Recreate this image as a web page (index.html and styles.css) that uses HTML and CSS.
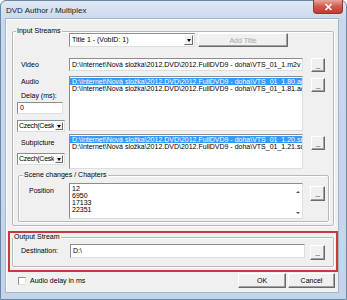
FILE: index.html
```html
<!DOCTYPE html>
<html lang="cs">

<head>
	<meta charset="UTF-8">
	<title>DVD Author / Multiplex</title>
	<link rel="stylesheet" href="styles.css">
</head>

<body>
	<div class="window">
		<div class="titlebar">
			<span class="title">DVD Author / Multiplex</span>
			<span class="close">
				<svg width="9" height="8" viewBox="0 0 9 8"><path d="M1.5 1 L7.5 7 M7.5 1 L1.5 7" stroke="#fff" stroke-width="1.6" fill="none"/></svg>
			</span>
		</div>

		<div class="client">
			<fieldset class="group input-streams">
				<legend>Input Streams</legend>

				<div class="row title-row">
					<div class="combo title-combo">
						<span class="combo-text">Title 1 - (VobID: 1)</span>
						<span class="combo-btn"><i class="arrow"></i></span>
					</div>
					<button class="btn add-title" disabled>Add Title</button>
				</div>

				<div class="row video-row">
					<label class="lbl">Video</label>
					<div class="field path">D:\Internet\Nová složka\2012.DVD\2012.FullDVD9 - doha\VTS_01_1.m2v</div>
					<button class="btn dots">...</button>
				</div>

				<div class="row audio-row">
					<div class="side">
						<div class="lbl audio-lbl">Audio</div>
						<div class="lbl delay-lbl">Delay (ms):</div>
						<div class="field delay">0</div>
						<div class="combo lang">
							<span class="combo-text">Czech(Cesk</span>
							<span class="combo-btn"><i class="arrow"></i></span>
						</div>
					</div>
					<div class="list audio-list">
						<div class="item sel">D:\Internet\Nová složka\2012.DVD\2012.FullDVD9 - doha\VTS_01_1.80.ac3</div>
						<div class="item">D:\Internet\Nová složka\2012.DVD\2012.FullDVD9 - doha\VTS_01_1.81.ac3</div>
					</div>
					<button class="btn dots">...</button>
				</div>

				<div class="row sub-row">
					<div class="side">
						<div class="lbl sub-lbl">Subpicture</div>
						<div class="combo lang">
							<span class="combo-text">Czech(Cesk</span>
							<span class="combo-btn"><i class="arrow"></i></span>
						</div>
					</div>
					<div class="list sub-list">
						<div class="item sel">D:\Internet\Nová složka\2012.DVD\2012.FullDVD9 - doha\VTS_01_1.20.sup</div>
						<div class="item">D:\Internet\Nová složka\2012.DVD\2012.FullDVD9 - doha\VTS_01_1.21.sup</div>
					</div>
					<button class="btn dots">...</button>
				</div>

				<fieldset class="group scene">
					<legend>Scene changes / Chapters</legend>
					<div class="row scene-row">
						<label class="lbl pos-lbl">Position</label>
						<div class="list scene-list">
							<div class="scene-items">
								<div class="item">12</div>
								<div class="item">6950</div>
								<div class="item">17133</div>
								<div class="item">22351</div>
							</div>
							<div class="vscroll">
								<i class="up"></i>
								<i class="down"></i>
							</div>
						</div>
						<button class="btn dots wide">...</button>
					</div>
				</fieldset>
			</fieldset>

			<div class="highlight">
				<fieldset class="group output">
					<legend>Output Stream</legend>
					<div class="row dest-row">
						<label class="lbl dest-lbl">Destination:</label>
						<div class="field dest">D:\</div>
						<button class="btn dots wide">...</button>
					</div>
				</fieldset>
			</div>

			<div class="footer">
				<span class="check"></span>
				<span class="check-lbl">Audio delay in ms</span>
				<button class="btn ok">OK</button>
				<button class="btn cancel">Cancel</button>
			</div>
		</div>
	</div>
</body>

</html>
```

FILE: styles.css
```css
* {
	box-sizing: border-box;
}

html,
body {
	height: 300px;
	overflow: hidden;
}

body {
	margin: 0;
	font-family: "Liberation Sans", Arial, sans-serif;
	font-size: 7px;
	color: #000;
	background: #fff;
}

.window {
	width: 347px;
	height: 300px;
	padding: 0 7px 0 4px;
	background: linear-gradient(#dfe9f5, #c9d9ec 18px, #c4d5ea);
	border: 1px solid #6a87a6;
	border-radius: 6px 6px 0 0;
	display: flex;
	flex-direction: column;
}

.titlebar {
	height: 17px;
	flex: none;
	display: flex;
	align-items: flex-start;
}

.title {
	font-size: 8px;
	line-height: 9px;
	margin: 5px 0 0 1px;
	color: #1a1a1a;
}

.close {
	margin: -1px -4px 0 auto;
	width: 30px;
	height: 14px;
	border: 1px solid #8b3b35;
	border-top: none;
	border-radius: 0 0 4px 4px;
	background: linear-gradient(#e9a79e, #d2594c 50%, #c23a2c);
	display: flex;
	align-items: center;
	justify-content: center;
}

.client {
	height: 275px;
	flex: none;
	background: #f0f0f0;
	border: 1px solid #a3b5ca;
	box-shadow: inset 1px 1px 0 #fff;
}

/* group boxes */
.group {
	margin: 0;
	padding: 0;
	min-width: 0;
	border: 1px solid #b9b9b9;
	border-radius: 2px;
	box-shadow: 1px 1px 0 #fff, inset 1px 1px 0 #fff;
}

legend {
	padding: 0 1px;
	line-height: 6px;
	height: 6px;
	background: #f0f0f0;
}

.input-streams {
	margin: 9px 0 0 6px;
	width: 322px;
	height: 198px;
}

.input-streams > legend {
	margin-left: 3px;
}

.row {
	display: flex;
	align-items: flex-start;
}

.lbl {
	display: block;
	white-space: nowrap;
}

/* inputs */
.field {
	background: #fff;
	border: 1px solid;
	border-color: #8d8d8d #dedede #dedede #8d8d8d;
	padding: 0 2px;
	white-space: nowrap;
	overflow: hidden;
}

.combo {
	display: flex;
	background: #fff;
	border: 1px solid;
	border-color: #8d8d8d #dedede #dedede #8d8d8d;
}

.combo-text {
	flex: 1;
	padding-left: 2px;
	white-space: nowrap;
	overflow: hidden;
}

.combo-btn {
	width: 9px;
	flex: none;
	margin: 1px;
	background: #f0f0f0;
	border: 1px solid;
	border-color: #fff #6b6b6b #6b6b6b #fff;
	display: flex;
	align-items: center;
	justify-content: center;
}

.arrow {
	border-left: 2.5px solid transparent;
	border-right: 2.5px solid transparent;
	border-top: 3px solid #000;
}

.btn {
	font: inherit;
	color: #000;
	padding: 0;
	flex: none;
	background: #f0f0f0;
	border: 1px solid;
	border-color: #fff #6b6b6b #6b6b6b #fff;
	box-shadow: inset -1px -1px 0 #a0a0a0;
}

.btn:disabled {
	color: #a8a8a8;
}

.dots {
	width: 14px;
	height: 14px;
	margin-left: 8px;
	line-height: 16px;
	letter-spacing: -0.5px;
}

.dots.wide {
	width: 15px;
	height: 15px;
	margin-left: 7px;
}

.list {
	background: #fff;
	border: 1px solid;
	border-color: #8d8d8d #dedede #dedede #8d8d8d;
	padding-top: 1px;
	overflow: hidden;
	flex: none;
}

.item {
	line-height: 7px;
	height: 7px;
	padding-left: 2px;
	white-space: nowrap;
}

.item.sel {
	background: #3399ff;
	color: #fff;
}

/* input streams rows */
.title-row {
	margin-top: -1px;
	padding-left: 56px;
	gap: 3px;
}

.title-combo {
	width: 126px;
	height: 14px;
	line-height: 12px;
}

.add-title {
	width: 90px;
	height: 14px;
}

.video-row {
	margin-top: 11px;
}

.video-row .lbl {
	width: 56px;
	flex: none;
	padding-left: 8px;
	line-height: 13px;
}

.path {
	width: 234px;
	height: 13px;
	line-height: 11px;
	flex: none;
}

.audio-row {
	margin-top: 4px;
}

.side {
	width: 56px;
	flex: none;
	padding-left: 4px;
}

.side .lbl {
	padding-left: 4px;
	line-height: 8px;
}

.audio-lbl {
	margin-top: 2px;
}

.delay-lbl {
	margin-top: 6px;
}

.delay {
	margin-top: 2px;
	width: 46px;
	height: 12px;
	line-height: 10px;
}

.lang {
	margin-top: 6px;
	width: 48px;
	height: 12px;
	line-height: 10px;
	letter-spacing: -0.3px;
}

.lang .combo-text {
	padding-left: 1px;
}

.lang .combo-btn {
	width: 8px;
}

.audio-list {
	width: 234px;
	height: 55px;
}

.audio-row .dots,
.sub-row .dots {
	margin-top: 2px;
}

.sub-row {
	margin-top: 2px;
}

.sub-lbl {
	margin-top: 5px;
}

.sub-list {
	width: 234px;
	height: 35px;
}

/* scene changes */
.scene {
	margin: 3px 0 0 5px;
	width: 311px;
	height: 50px;
}

.scene > legend {
	margin-left: 4px;
}

.scene-row {
	margin-top: 5px;
}

.pos-lbl {
	width: 50px;
	flex: none;
	padding-left: 10px;
	margin-top: 4px;
	line-height: 8px;
}

.scene-list {
	width: 234px;
	height: 36px;
	display: flex;
}

.scene-items {
	flex: 1;
}

.vscroll {
	width: 9px;
	display: flex;
	flex-direction: column;
	justify-content: space-between;
	align-items: center;
	padding: 6px 0 4px;
}

.vscroll i {
	border-left: 2px solid transparent;
	border-right: 2px solid transparent;
}

.vscroll .up {
	border-bottom: 2px solid #555;
}

.vscroll .down {
	border-top: 2px solid #555;
}

.scene-row .dots {
	margin-top: 3px;
}

/* output */
.highlight {
	margin: 5px 0 0 2px;
	width: 330px;
	height: 41px;
	border: 2px solid #c8383e;
}

.output {
	margin: 1px 0 0 2px;
	width: 322px;
	height: 33px;
}

.dest-row {
	margin-top: 4px;
}

.dest-lbl {
	width: 57px;
	flex: none;
	padding-left: 8px;
	line-height: 14px;
}

.dest {
	width: 235px;
	height: 14px;
	line-height: 12px;
	flex: none;
}

.dest-row .dots {
	margin-top: 1px;
	margin-left: 5px;
}

/* footer */
.footer {
	display: flex;
	align-items: center;
	height: 15px;
	margin-top: 1px;
	padding-left: 12px;
	padding-right: 3px;
}

.check {
	width: 8px;
	height: 8px;
	background: #fff;
	border: 1px solid;
	border-color: #8d8d8d #e0e0e0 #e0e0e0 #8d8d8d;
}

.check-lbl {
	margin-left: 4px;
}

.ok,
.cancel {
	height: 15px;
}

.ok {
	margin-left: auto;
	width: 48px;
}

.cancel {
	margin-left: 2px;
	width: 47px;
}
```
